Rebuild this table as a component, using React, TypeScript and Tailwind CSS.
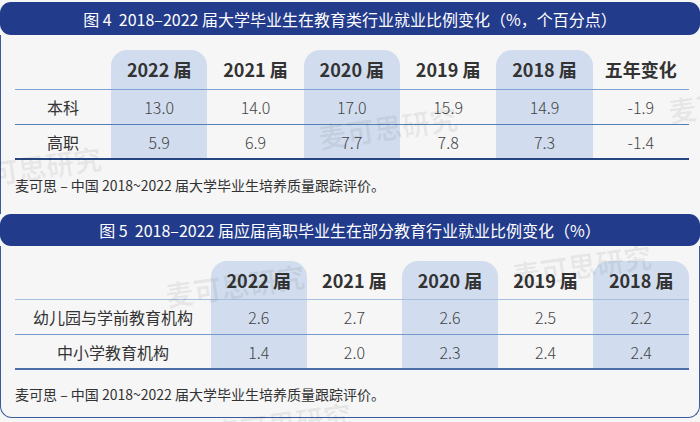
import clsx from 'clsx'

type Column = { head: string; values: string[]; hl?: boolean }

type Lines = { head: string; mid: string; bottom: string }

const FONT = "font-['Noto_Sans_CJK_SC','Noto_Sans',sans-serif]"

const table1: Column[] = [
  { head: '2022 届', values: ['13.0', '5.9'], hl: true },
  { head: '2021 届', values: ['14.0', '6.9'] },
  { head: '2020 届', values: ['17.0', '7.7'], hl: true },
  { head: '2019 届', values: ['15.9', '7.8'] },
  { head: '2018 届', values: ['14.9', '7.3'], hl: true },
  { head: '五年变化', values: ['-1.9', '-1.4'] },
]

const table2: Column[] = [
  { head: '2022 届', values: ['2.6', '1.4'], hl: true },
  { head: '2021 届', values: ['2.7', '2.0'] },
  { head: '2020 届', values: ['2.6', '2.3'], hl: true },
  { head: '2019 届', values: ['2.5', '2.4'] },
  { head: '2018 届', values: ['2.2', '2.4'], hl: true },
]

const lines1: Lines = {
  head: 'border-b-[1.5px] border-[#7ca3d4]',
  mid: 'border-b-[1.5px] border-[#5680b5]',
  bottom: 'border-b-2 border-[#274681]',
}

const lines2: Lines = {
  head: 'border-b-[1.5px] border-[#a6bfdf]',
  mid: 'border-b-[1.5px] border-[#7399cb]',
  bottom: 'border-b-2 border-[#4a6da5]',
}

function Col({ col, headH, lines }: { col: Column; headH: string; lines: Lines }) {
  return (
    <div className={clsx('flex flex-1 flex-col', col.hl && 'rounded-t-[16px] bg-[#d1ddee]')}>
      <div className={clsx('flex items-center justify-center text-[18px] font-bold text-[#333]', headH, lines.head)}>
        {col.head}
      </div>
      {col.values.map((v, i) => (
        <div
          key={i}
          className={clsx(
            'flex h-[35px] items-center justify-center text-[16px] font-light text-[#444]',
            i < col.values.length - 1 ? lines.mid : lines.bottom,
          )}
        >
          {v}
        </div>
      ))}
    </div>
  )
}

function Table({
  labels,
  cols,
  labelW,
  headH,
  lines,
}: {
  labels: string[]
  cols: Column[]
  labelW: string
  headH: string
  lines: Lines
}) {
  return (
    <div className="ml-[14px] flex w-[674px]">
      <div className={clsx('flex flex-col', labelW)}>
        <div className={clsx(headH, lines.head)} />
        {labels.map((l, i) => (
          <div
            key={l}
            className={clsx(
              'flex h-[35px] items-center justify-center text-[16px] text-[#333]',
              i < labels.length - 1 ? lines.mid : lines.bottom,
            )}
          >
            {l}
          </div>
        ))}
      </div>
      {cols.map((c) => (
        <Col key={c.head} col={c} headH={headH} lines={lines} />
      ))}
    </div>
  )
}

function Title({ text, h }: { text: string; h: string }) {
  return (
    <div
      className={clsx(
        'flex items-center justify-center whitespace-pre rounded-[11px] bg-[#233b8b] text-[16px] text-white',
        h,
      )}
    >
      {text}
    </div>
  )
}

const SOURCE = '麦可思 – 中国 2018~2022 届大学毕业生培养质量跟踪评价。'

const marks = [
  { x: -38, y: 146 },
  { x: 318, y: 106 },
  { x: 668, y: 80 },
  { x: 165, y: 264 },
  { x: 512, y: 244 },
  { x: 212, y: 402 },
]

export default function App() {
  return (
    <div className={clsx('relative h-[422px] w-[700px] overflow-hidden bg-[#f6f6f6] pt-[2px]', FONT)}>
      <section>
        <Title h="h-[33px]" text="图 4  2018–2022 届大学毕业生在教育类行业就业比例变化（%，个百分点）" />
        <div className="h-[179px] border-l-[1.5px] border-[#3b5b9c] pt-[15px]">
          <Table labels={['本科', '高职']} cols={table1} labelW="w-[96px]" headH="h-[40px]" lines={lines1} />
          <p className="ml-[14px] mt-[15px] text-[14px] leading-[20px] text-[#333]">{SOURCE}</p>
        </div>
      </section>

      <section>
        <Title h="h-[32px]" text="图 5  2018–2022 届应届高职毕业生在部分教育行业就业比例变化（%）" />
        <div className="h-[172px] rounded-b-[12px] border-x-[1.5px] border-b-[1.5px] border-[#3b5b9c] pt-[15px]">
          <Table
            labels={['幼儿园与学前教育机构', '中小学教育机构']}
            cols={table2}
            labelW="w-[196px]"
            headH="h-[39px]"
            lines={lines2}
          />
          <p className="ml-[14px] mt-[14px] text-[14px] leading-[20px] text-[#333]">{SOURCE}</p>
        </div>
      </section>

      {marks.map((m, i) => (
        <span
          key={i}
          className="pointer-events-none absolute -rotate-[8deg] text-[28px] font-bold whitespace-nowrap text-black/[0.06]"
          style={{ left: m.x, top: m.y }}
        >
          麦可思研究
        </span>
      ))}
    </div>
  )
}
